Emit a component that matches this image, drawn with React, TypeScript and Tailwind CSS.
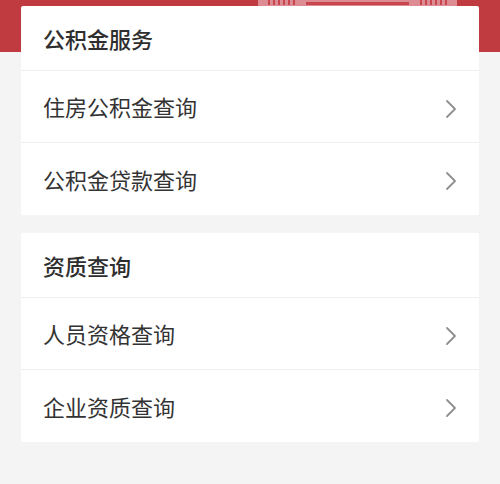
const font = {
  fontFamily: '"Noto Sans CJK SC", "Noto Sans", sans-serif',
};

type Section = {
  title: string;
  items: string[];
};

const sections: Section[] = [
  { title: '公积金服务', items: ['住房公积金查询', '公积金贷款查询'] },
  { title: '资质查询', items: ['人员资格查询', '企业资质查询'] },
];

function Chevron() {
  return (
    <svg width="14" height="20" viewBox="0 0 14 20" className="shrink-0 mt-[4px]">
      <polyline
        points="3,2 11,10 3,18"
        fill="none"
        stroke="#8f8f8f"
        strokeWidth="1.8"
        strokeLinecap="round"
        strokeLinejoin="round"
      />
    </svg>
  );
}

function Banner() {
  return (
    <div className="h-[52px] bg-[#bf3b40] flex justify-end pr-[43px]">
      <div className="w-[199px] h-[6px] bg-[#dc8c92] flex items-start gap-[3px] px-[10px]">
        {Array.from({ length: 6 }).map((_, i) => (
          <div key={i} className="w-[2px] h-[5px] bg-[#c8474e]" />
        ))}
        <div className="flex-1 h-[3px] mt-[2px] bg-[#c8474e] mx-[8px]" />
        {Array.from({ length: 6 }).map((_, i) => (
          <div key={'b' + i} className="w-[2px] h-[5px] bg-[#c8474e]" />
        ))}
      </div>
    </div>
  );
}

export default function App() {
  return (
    <div className="w-[500px] h-[484px] bg-[#f4f4f4] overflow-hidden" style={font}>
      <Banner />
      <div className="-mt-[46px] px-[21px] flex flex-col gap-[18px]">
        {sections.map((s) => (
          <div key={s.title} className="bg-white rounded-[2px]">
            <div className="h-[65px] flex items-center pl-[22px] border-b border-[#efefef]">
              <span className="text-[22px] font-medium text-[#2e2e2e]">{s.title}</span>
            </div>
            {s.items.map((item, i) => (
              <div
                key={item}
                className={
                  'h-[72px] flex items-center justify-between pl-[22px] pr-[21px] ' +
                  (i < s.items.length - 1 ? 'border-b border-[#efefef]' : '')
                }
              >
                <span className="text-[22px] text-[#333333]">{item}</span>
                <Chevron />
              </div>
            ))}
          </div>
        ))}
      </div>
    </div>
  );
}
